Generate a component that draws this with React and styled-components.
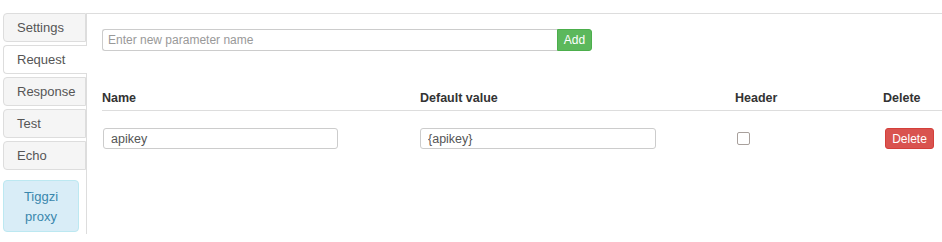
import React from "react";
import styled, { createGlobalStyle } from "styled-components";

const GlobalStyle = createGlobalStyle`
  html, body {
    margin: 0;
    padding: 0;
    background: #fff;
    font-family: "Liberation Sans", Arial, sans-serif;
    color: #333;
  }
`;

const Page = styled.div`
  display: flex;
  padding: 13px 0 10px 3px;
  width: 942px;
  box-sizing: border-box;
`;

const Nav = styled.ul`
  list-style: none;
  margin: 0;
  padding: 0;
  width: 83px;
  display: flex;
  flex-direction: column;
  gap: 3px;
  position: relative;
  z-index: 1;
`;

const Tab = styled.li`
  height: 29px;
  box-sizing: border-box;
  display: flex;
  align-items: center;
  padding-left: 13px;
  margin-right: ${(p) => (p.$active ? "-1px" : "0")};
  font-size: 13px;
  color: #555;
  background: ${(p) => (p.$active ? "#fff" : "#f5f5f5")};
  border: 1px solid #ddd;
  border-right: ${(p) => (p.$active ? "none" : "1px solid #ddd")};
  border-radius: 4px 0 0 4px;
`;

const Proxy = styled.div`
  margin-top: 10px;
  width: 76px;
  height: 52px;
  box-sizing: border-box;
  background: #d9edf7;
  border: 1px solid #bce8f1;
  border-radius: 4px;
  color: #3a87ad;
  font-size: 13px;
  line-height: 20px;
  text-align: center;
  padding-top: 6px;
`;

const Content = styled.div`
  flex: 1;
  border-top: 1px solid #ddd;
  border-left: 1px solid #ddd;
  padding: 15px 0 0 15px;
  min-height: 205px;
`;

const AddRow = styled.div`
  display: flex;
  height: 22px;
`;

const NameInput = styled.input`
  width: 455px;
  height: 22px;
  box-sizing: border-box;
  border: 1px solid #ccc;
  border-right: none;
  border-radius: 3px 0 0 3px;
  padding: 0 5px;
  font-family: inherit;
  font-size: 12px;
  color: #555;
  outline: none;
  &::placeholder {
    color: #999;
  }
`;

const Button = styled.button`
  height: ${(p) => p.$h || 22}px;
  width: ${(p) => p.$w}px;
  box-sizing: border-box;
  padding: 0;
  font-family: inherit;
  font-size: 12px;
  color: #fff;
  background: ${(p) => p.$bg};
  border: 1px solid ${(p) => p.$border};
  border-radius: ${(p) => p.$radius};
`;

const Table = styled.table`
  margin-top: 33px;
  width: 840px;
  border-collapse: collapse;
  table-layout: fixed;
`;

const Th = styled.th`
  text-align: left;
  font-size: 12.5px;
  font-weight: bold;
  color: #333;
  padding: 4px 0 2px 0;
  height: 20px;
  border-bottom: 1px solid #ddd;
  width: ${(p) => p.$w}px;
`;

const Td = styled.td`
  padding: 17px 0 0 ${(p) => p.$pl || 0}px;
  vertical-align: middle;
`;

const CellInput = styled.input`
  width: ${(p) => p.$w || 236}px;
  height: 21px;
  box-sizing: border-box;
  border: 1px solid #ccc;
  border-radius: 3px;
  padding: 0 7px;
  font-family: inherit;
  font-size: 12.5px;
  color: #555;
  outline: none;
  display: block;
`;

const Check = styled.input`
  appearance: none;
  display: block;
  margin: 0;
  width: 13px;
  height: 13px;
  box-sizing: border-box;
  border: 1px solid #a8a09c;
  border-radius: 2px;
  background: #fff;
`;

const tabs = ["Settings", "Request", "Response", "Test", "Echo"];

export default function App() {
  return (
    <>
      <GlobalStyle />
      <Page>
        <div>
          <Nav>
            {tabs.map((t) => (
              <Tab key={t} $active={t === "Request"}>
                {t}
              </Tab>
            ))}
          </Nav>
          <Proxy>
            Tiggzi
            <br />
            proxy
          </Proxy>
        </div>
        <Content>
          <AddRow>
            <NameInput placeholder="Enter new parameter name" />
            <Button $w={35} $bg="#5cb85c" $border="#4cae4c" $radius="0 3px 3px 0">
              Add
            </Button>
          </AddRow>
          <Table>
            <thead>
              <tr>
                <Th $w={318}>Name</Th>
                <Th $w={315}>Default value</Th>
                <Th $w={148}>Header</Th>
                <Th>Delete</Th>
              </tr>
            </thead>
            <tbody>
              <tr>
                <Td $pl={1}>
                  <CellInput defaultValue="apikey" $w={235} />
                </Td>
                <Td>
                  <CellInput defaultValue="{apikey}" />
                </Td>
                <Td $pl={2}>
                  <Check type="checkbox" />
                </Td>
                <Td $pl={2}>
                  <Button $w={49} $h={21} $bg="#d9534f" $border="#d43f3a" $radius="3px">
                    Delete
                  </Button>
                </Td>
              </tr>
            </tbody>
          </Table>
        </Content>
      </Page>
    </>
  );
}
